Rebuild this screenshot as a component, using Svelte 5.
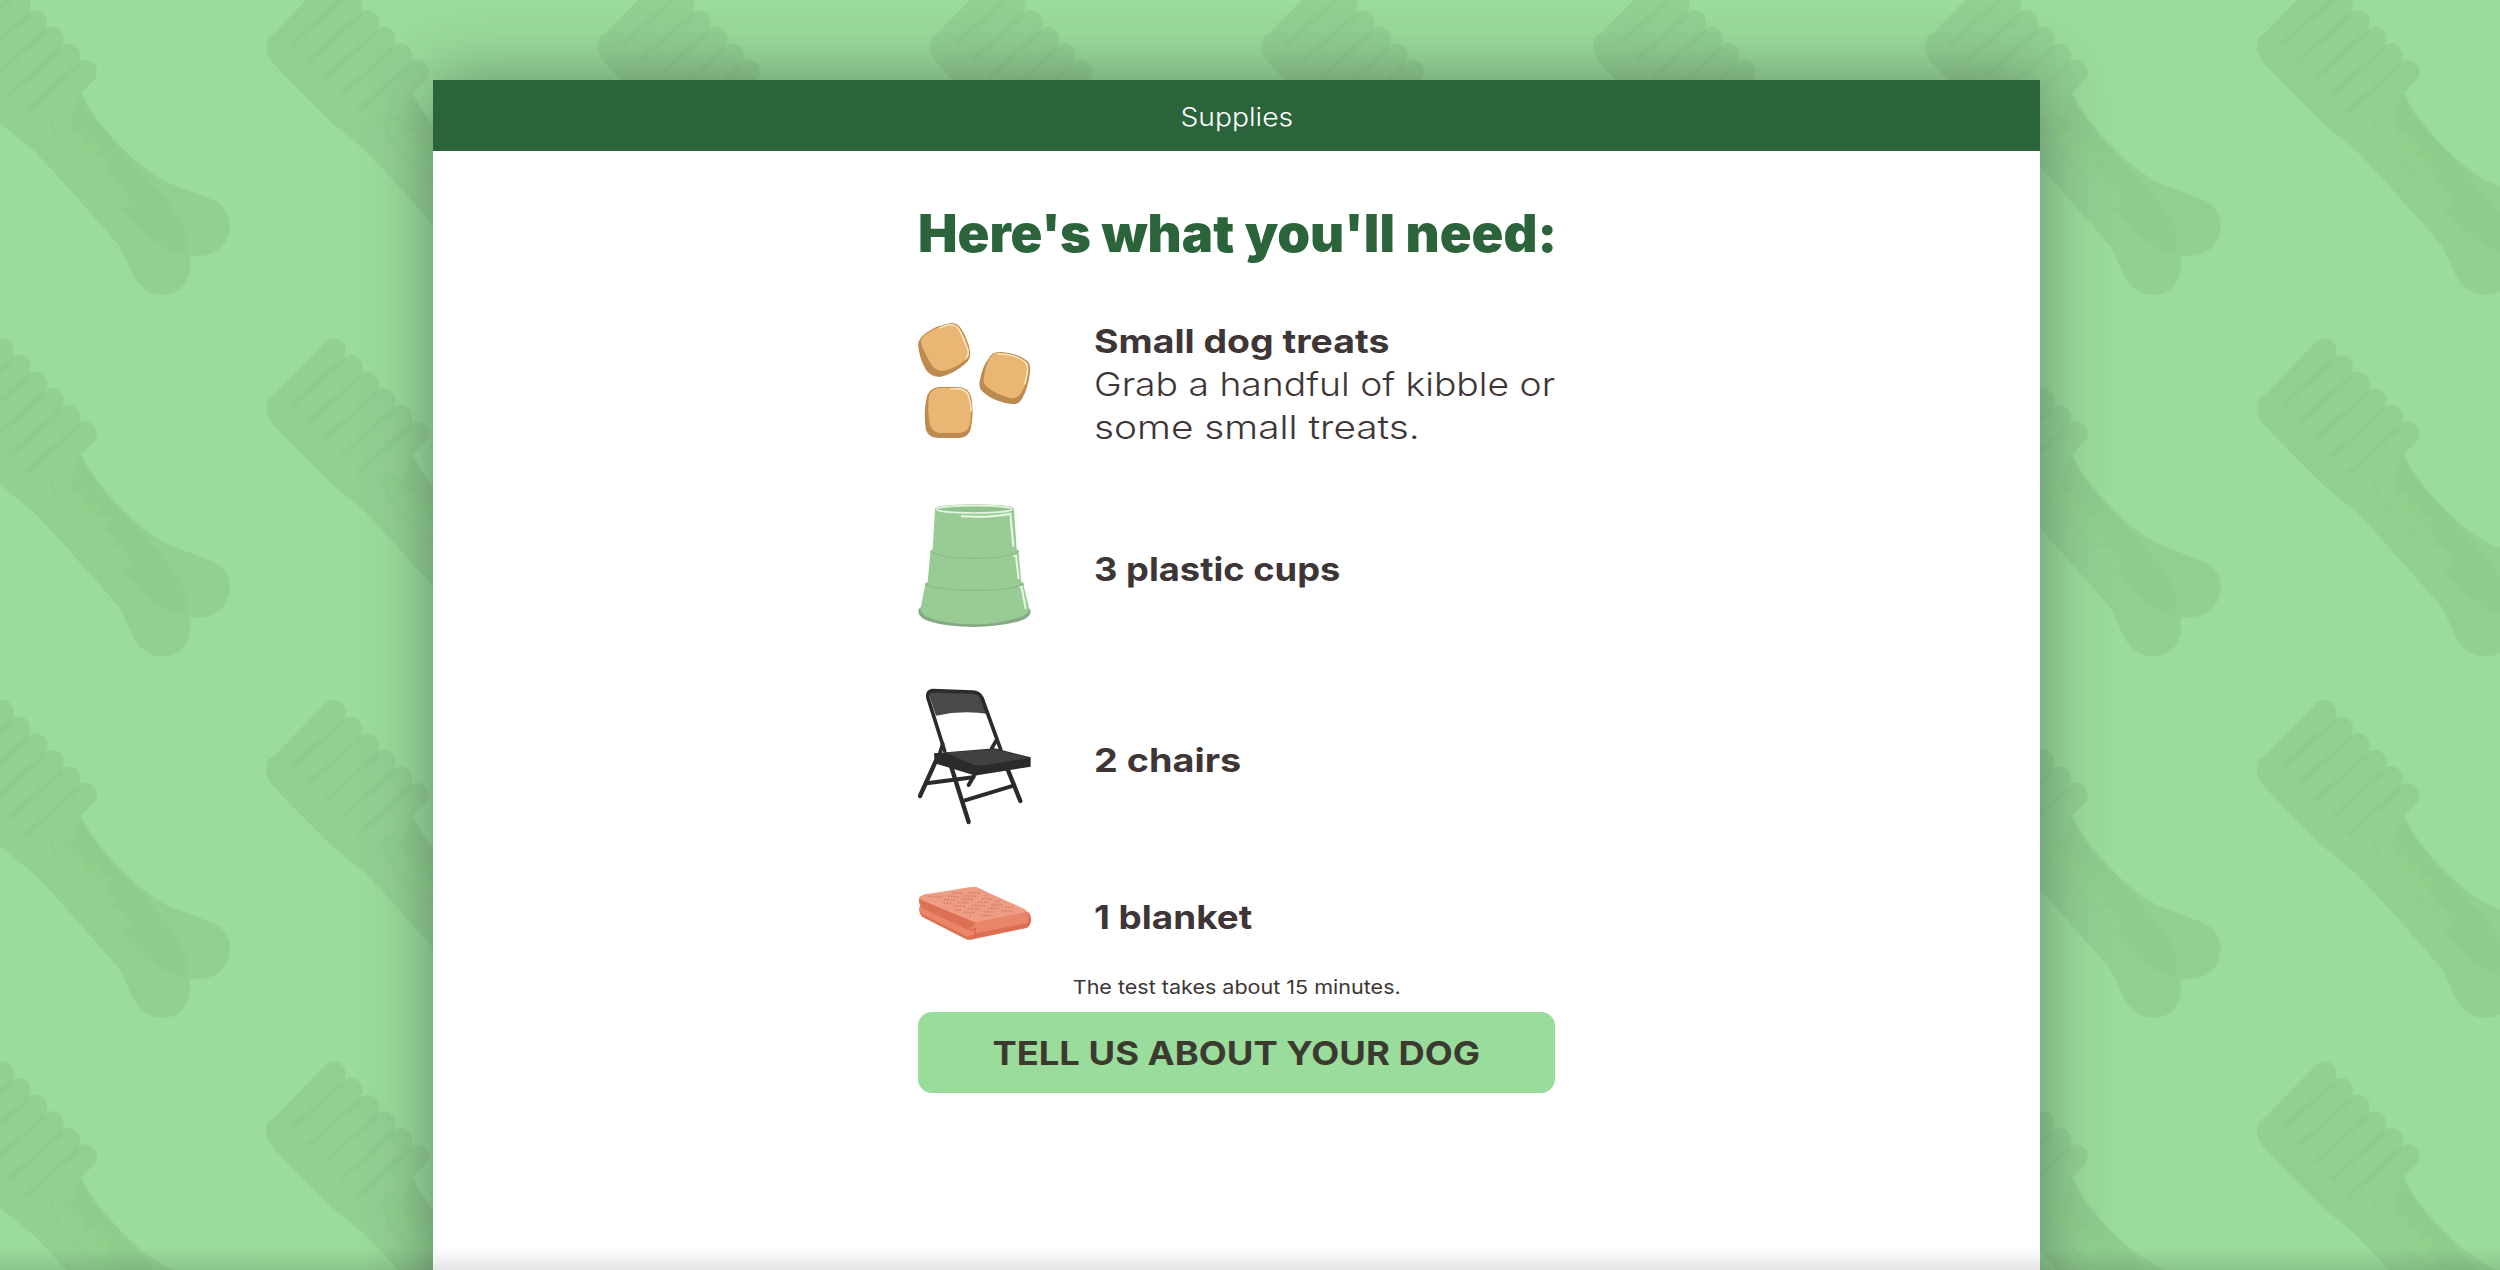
<script>
  const supplies = [
    {
      icon: 'treats',
      height: 129,
      title: 'Small dog treats',
      stretch: 1.134,
      detail: [
        { text: 'Grab a handful of kibble or', stretch: 1.129 },
        { text: 'some small treats.', stretch: 1.176 }
      ]
    },
    { icon: 'cups', height: 137, title: '3 plastic cups', stretch: 1.1 },
    { icon: 'chair', height: 149, title: '2 chairs', stretch: 1.145 },
    { icon: 'blanket', height: 69, title: '1 blanket', stretch: 1.117 }
  ];

  const teeth = [0, 1, 2, 3, 4, 5];

  // small flecks on top of the blanket
  const flecks = Array.from({ length: 90 }, (_, i) => {
    const u = ((i * 37) % 90) / 90;
    const v = (((i * 53) % 97) / 97) * 0.92 + 0.04;
    return { x: 80 + u * 135 + v * 150, y: 76 - u * 20 + v * 74 - u * v * 8 };
  });
</script>

<div class="page">
  <svg class="pattern" aria-hidden="true">
    <defs>
      <filter id="soften">
        <feGaussianBlur stdDeviation="1.2" />
      </filter>
      <pattern id="brushes" x="-66" y="-24" width="331.8" height="361.5" patternUnits="userSpaceOnUse">
        <g stroke="#92d092" stroke-width="24" stroke-linecap="round">
          {#each teeth as i}
            <line x1={20 + i * 16.6} y1={62 + i * 16.6} x2={68 + i * 16.6} y2={13 + i * 16.6} />
          {/each}
        </g>
        <path
          fill="#92d092"
          d="M3 60Q-3 72 4 83Q12 93 30 111L66 147L99 174Q128 204 150 230Q170 252 186 271L197 295Q207 318 228 319Q252 318 256 294V280H266Q293 278 296 251Q296 232 279 224L232 206Q205 190 184 168Q160 145 148 118L110 80L40 40Z"
        />
        <g filter="url(#soften)">
          <path
            fill="#8ecb8e"
            d="M145 118Q165 150 195 180L226 216Q244 236 252 256V279Q230 276 205 252L186 232Q204 230 188 212L135 150Z"
            opacity=".75"
          />
          <g stroke="#8dca8d" stroke-width="4" stroke-linecap="round">
            {#each teeth.slice(0, 5) as i}
              <line x1={77 + i * 16.6} y1={23 + i * 16.6} x2={27 + i * 16.4} y2={67 + i * 17} />
            {/each}
          </g>
          <g transform="translate(151 174) rotate(46)">
            <ellipse rx="46" ry="13" fill="none" stroke="#8ecb8c" stroke-width="2" />
            <path d="M-34 0q5 -12 9 -2t8 -2t8 1t9 -2t8 2t8 -1t8 1t8 0" fill="none" stroke="#90d18b" stroke-width="4" />
          </g>
        </g>
      </pattern>
    </defs>
    <rect width="100%" height="100%" fill="url(#brushes)" />
  </svg>

  <main class="card">
    <header class="card-header"><span>Supplies</span></header>

    <div class="content">
      <h1>Here's what you'll need:</h1>

      <ul class="supplies">
        {#each supplies as item}
          <li class="supply">
            <svg class="supply-icon" width="113" height={item.height} viewBox="0 0 113 {item.height}">
              {#if item.icon === 'treats'}
                <g fill="#bd8a50">
                  <path d="M8 13Q19 5 34 3Q40 3 44 10Q50 20 52 31Q53 39 48 43Q36 54 22 57Q13 57 8 50Q1 38 0 24Q1 18 8 13Z" />
                  <path d="M71 38Q74 31 84 32Q98 33 108 40Q113 43 112 52Q110 68 105 77Q101 85 94 84Q76 82 65 72Q60 68 62 60Q64 47 71 38Z" />
                  <path d="M9 76Q12 68 21 67H39Q50 67 53 76Q56 92 53 108Q51 117 42 118H20Q10 117 8 110Q5 93 9 76Z" />
                </g>
                <g fill="#e9b673">
                  <path d="M10 13Q20 6 34 4Q39 4 43 11Q49 21 51 31Q52 38 46 41Q36 49 25 51Q17 51 13 44Q5 31 3 22Q3 17 10 13Z" />
                  <path d="M72 38Q75 32 84 33Q98 34 107 41Q111 44 110 52Q108 64 104 72Q100 79 92 78Q79 75 69 67Q64 62 66 57Q67 47 72 38Z" />
                  <path d="M11 76Q14 68 22 68H39Q49 68 52 76Q54 91 52 104Q50 112 42 113H22Q14 112 12 105Q9 90 11 76Z" />
                </g>
                <g fill="none" stroke="#fbe3bd" stroke-width="1.6" stroke-linecap="round">
                  <path d="M22 8Q31 4 35 5Q40 6 43 13L50 30Q51 35 48 38" />
                  <path d="M80 34Q98 34 107 42Q111 45 109 54L107 64" />
                  <path d="M33 69Q47 67 50 75Q53 82 53 91" />
                </g>
              {:else if item.icon === 'cups'}
                <g transform="translate(-18 -7) scale(.33333)">
                  <path fill="#85a984" d="M55 365Q54 355 64 352H382Q392 355 392 366Q390 385 352 395Q290 410 223 411Q140 410 92 395Q57 385 55 365Z" />
                  <path
                    fill="#99cb95"
                    d="M105 57Q105 44 223 43Q342 44 342 57L350 178Q358 181 356 190L364 275Q374 279 371 288L388 358Q384 378 340 388Q290 403 223 403Q150 403 100 388Q62 376 61 358L75 288Q73 279 83 275L91 190Q90 181 98 178Z"
                  />
                  <ellipse cx="223" cy="58" rx="113" ry="11" fill="#93c28f" stroke="#e2f3e0" stroke-width="5" />
                  <g fill="none" stroke="#8bbb88" stroke-width="4">
                    <path d="M92 183Q120 205 225 205Q330 205 356 183" />
                    <path d="M76 281Q105 301 225 301Q340 301 371 281" />
                  </g>
                  <g fill="none" stroke="#e8f8e5" stroke-width="6">
                    <path d="M183 79Q270 84 331 71L340 171" />
                    <path d="M340 198H348L356 268" />
                    <path d="M359 291H365L377 357" />
                  </g>
                </g>
              {:else if item.icon === 'chair'}
                <g transform="translate(-18 -12) scale(.33333)">
                  <path fill="#494949" d="M84 66Q95 59 120 62L225 66Q242 68 250 86L267 132Q185 120 108 137Z" />
                  <g fill="none" stroke="#2b2b2b" stroke-width="11" stroke-linecap="round" stroke-linejoin="round">
                    <path d="M134 243L84 84Q80 65 96 62L218 66Q238 67 246 84L302 238" />
                    <path d="M128 222L120 248" />
                    <path d="M108 272L60 378" stroke-width="13" />
                    <path d="M152 285L206 456" stroke-width="13" />
                    <path d="M323 298L361 393" stroke-width="13" />
                    <path d="M226 310L206 345" stroke-width="12" />
                    <path d="M80 340L220 322" stroke-width="12" />
                    <path d="M195 391L343 346" stroke-width="12" />
                    <path d="M288 213L275 235" />
                  </g>
                  <path fill="#2b2b2b" d="M102 250L285 235L392 262V290L236 315Q225 317 210 312L104 280Z" />
                  <path fill="#414141" d="M138 248L284 238L388 264L250 286Q230 289 215 282Z" />
                </g>
              {:else}
                <g transform="translate(-18 -9) scale(.33333)">
                  <path
                    fill="#dd6f52"
                    d="M60 80Q52 94 61 106Q52 124 66 140L197 207Q207 212 222 207L380 174Q395 165 393 145Q392 130 382 125L230 52L84 73Z"
                  />
                  <path fill="#e9866a" d="M60 82Q51 99 72 111L205 174Q218 179 224 157L386 126L384 158L228 190L202 200L66 132Q55 121 61 108Z" />
                  <path fill="#ee9c84" d="M62 79Q70 72 100 70L208 52Q222 49 235 55L372 116Q387 124 374 128L235 155Q222 158 208 150L64 90Q57 84 62 79Z" />
                  <path d="M62 109L202 176Q212 182 228 176" fill="none" stroke="#d96c4d" stroke-width="4" />
                  <path d="M225 174V202" stroke="#dd6447" stroke-width="4" />
                  {#each flecks as fleck}
                    <circle cx={fleck.x} cy={fleck.y} r="2.8" fill="#d3806a" />
                  {/each}
                </g>
              {/if}
            </svg>
            <div class="supply-text" class:single={!item.detail}>
              <strong style="transform: scaleX({item.stretch})">{item.title}</strong>
              {#if item.detail}
                <p>
                  {#each item.detail as line}
                    <span style="transform: scaleX({line.stretch})">{line.text}</span>
                  {/each}
                </p>
              {/if}
            </div>
          </li>
        {/each}
      </ul>

      <p class="note"><span>The test takes about 15 minutes.</span></p>
      <button class="cta"><span>TELL US ABOUT YOUR DOG</span></button>
    </div>
  </main>

  <div class="bottom-fade"></div>
</div>

<style>
  :global(body) {
    margin: 0;
  }

  .page {
    position: relative;
    box-sizing: border-box;
    height: 1270px;
    padding: 80px 460px 0 433px;
    overflow: hidden;
    background: #9adc9b;
    color: #3e3636;
    font-family: Inter, "Liberation Sans", sans-serif;
  }

  .pattern {
    position: absolute;
    inset: 0;
    width: 100%;
    height: 100%;
  }

  .card {
    position: relative;
    height: 1300px;
    background: #fff;
    box-shadow: 0 0 62px rgba(40, 50, 50, 0.46);
  }

  .card-header {
    display: flex;
    align-items: center;
    justify-content: center;
    height: 71px;
    background: #2b643a;
    color: #fff;
    font-size: 25px;
    font-weight: 350;
    padding-top: 2px;
    box-sizing: border-box;
  }

  .card-header span {
    transform: scaleX(1.13);
  }

  .content {
    display: flex;
    flex-direction: column;
    width: 637px;
    margin: 0 auto;
    padding-top: 52px;
  }

  h1 {
    margin: 0;
    color: #2b643a;
    font-size: 52px;
    font-weight: 900;
    line-height: 62px;
    white-space: nowrap;
    transform: scaleX(1.012);
    transform-origin: left;
  }

  .supplies {
    display: flex;
    flex-direction: column;
    gap: 48px;
    margin: 55px 0 0;
    padding: 0;
    list-style: none;
  }

  .supply {
    display: flex;
    align-items: center;
    gap: 63px;
  }

  .supply-icon {
    display: block;
    flex: none;
  }

  .supply-text {
    flex: 1;
    font-size: 33px;
    line-height: 43px;
    white-space: nowrap;
  }

  .supply-text.single {
    padding-top: 7px;
  }

  .supply-text strong {
    display: block;
    font-weight: 750;
    transform-origin: left;
  }

  .supply-text p {
    margin: 0;
    font-weight: 350;
  }

  .supply-text span {
    display: block;
    transform-origin: left;
  }

  .note {
    margin: 26px 0 10px;
    font-size: 19px;
    line-height: 28px;
    text-align: center;
  }

  .note span {
    display: inline-block;
    transform: scaleX(1.133);
  }

  .cta {
    height: 81px;
    border: 0;
    border-radius: 14px;
    background: #9adc9b;
    color: #3c3a30;
    font: 700 33px Inter, "Liberation Sans", sans-serif;
    cursor: pointer;
    white-space: nowrap;
  }

  .cta span {
    display: inline-block;
    transform: scaleX(1.102);
  }

  .bottom-fade {
    position: absolute;
    right: 0;
    bottom: 0;
    left: 0;
    height: 22px;
    background: linear-gradient(rgba(0, 0, 0, 0), rgba(0, 0, 0, 0.1));
  }
</style>
